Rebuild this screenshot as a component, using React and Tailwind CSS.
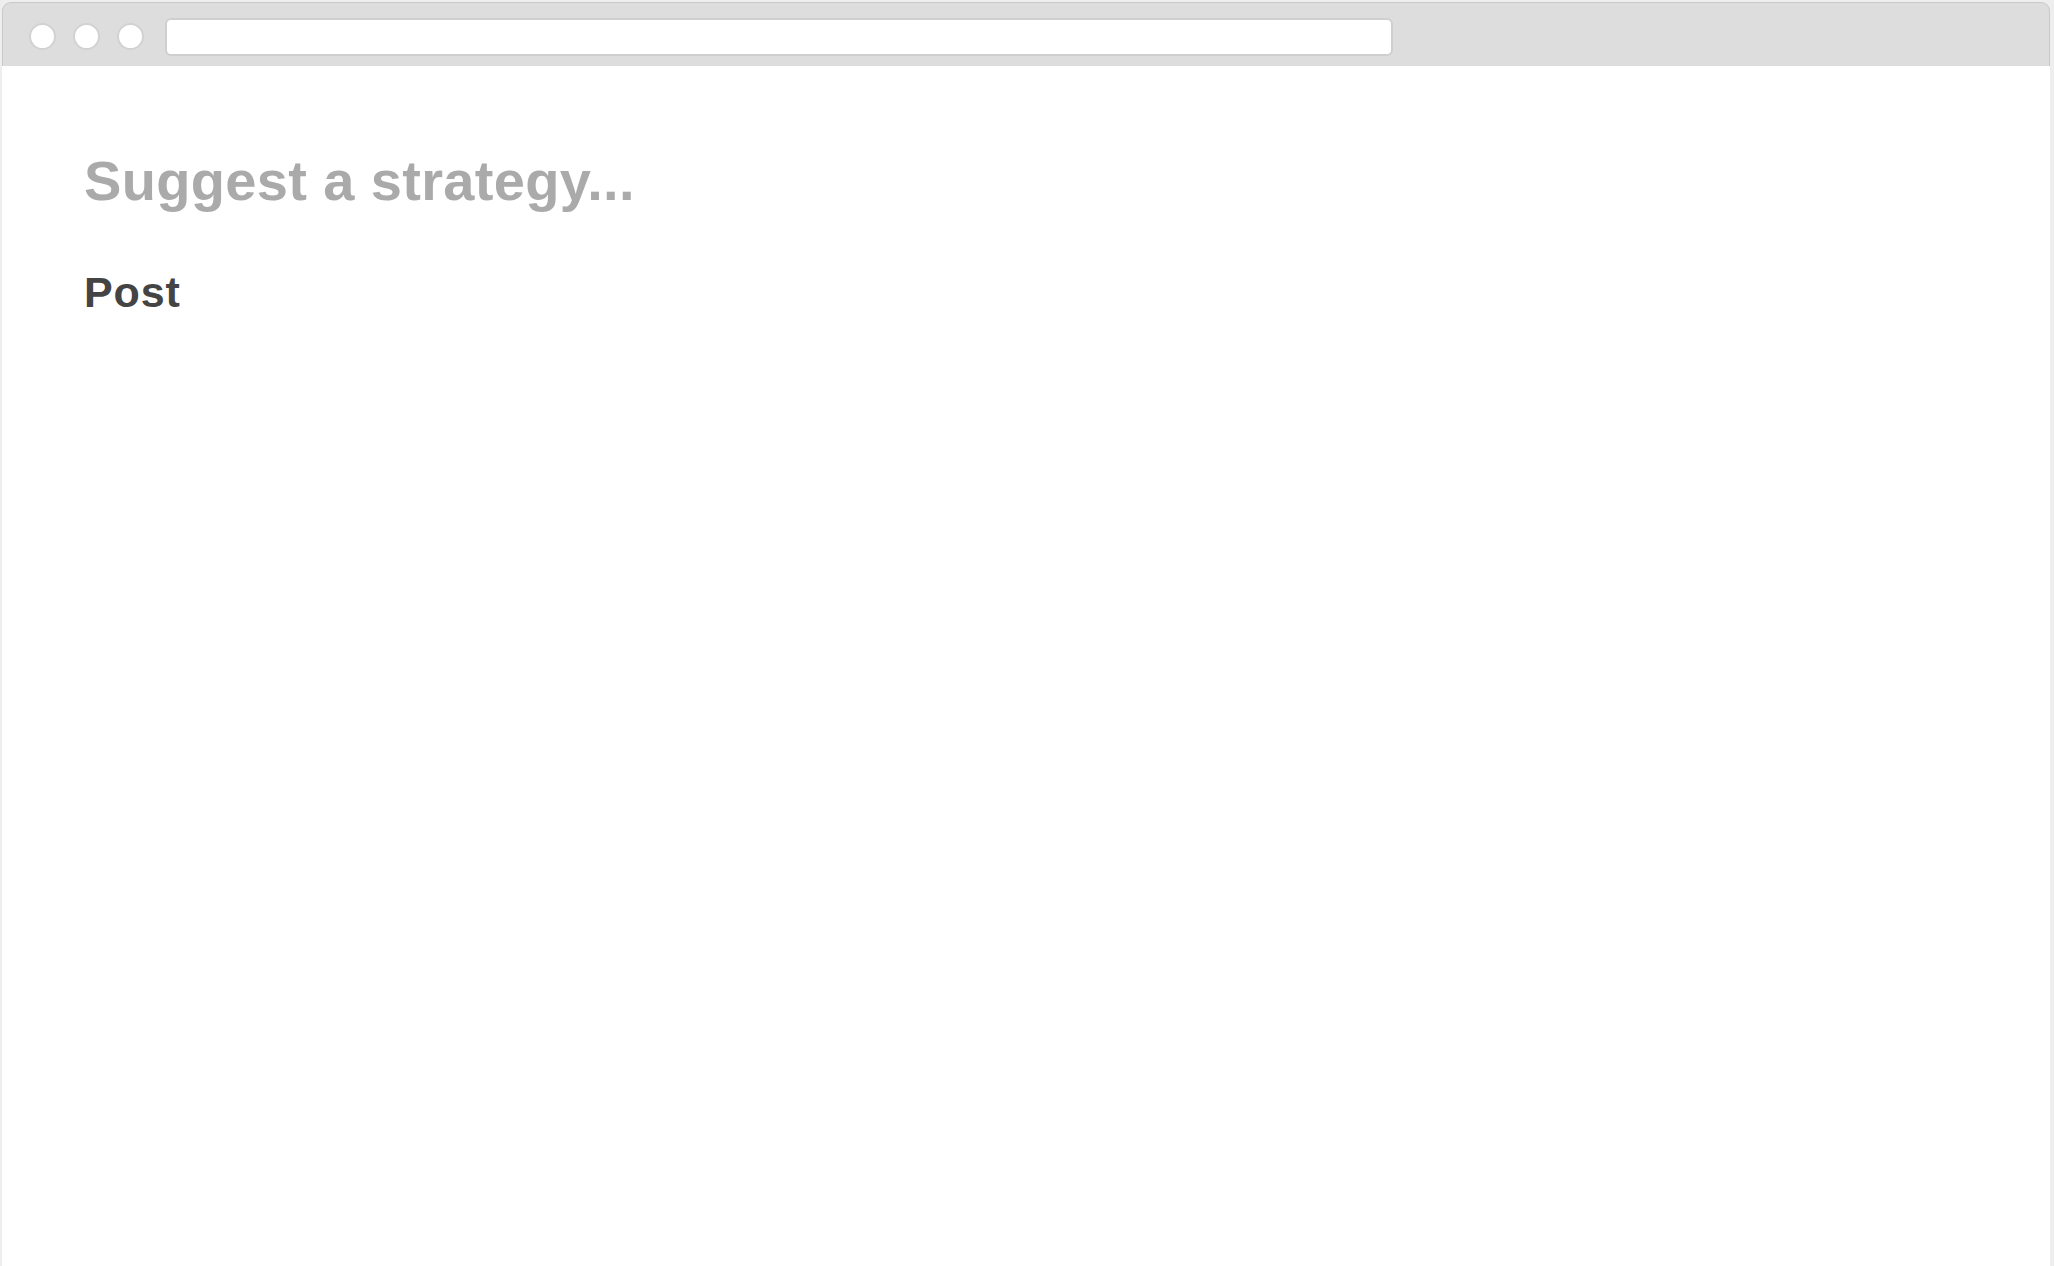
import React from "react";

const Dot = () => (
  <div className="w-[27px] h-[27px] rounded-full bg-white border-2 border-[#d2d2d2]" />
);

const App = () => {
  return (
    <div className="min-h-[1266px] bg-[#eeeeee] pl-[2px] pt-[2px] font-['Liberation_Sans',Arial,sans-serif]">
      <div className="w-[2048px] min-h-[1264px] flex flex-col">
        {/* browser chrome */}
        <div className="h-[64px] shrink-0 flex items-center pt-[4px] pl-[26px] bg-[#dddddd] border border-b-0 border-[#c9c9c9] rounded-t-[9px]">
          <div className="flex items-center gap-[17px]">
            <Dot />
            <Dot />
            <Dot />
          </div>
          <div className="ml-[21px] w-[1228px] h-[38px] bg-white border-2 border-[#cfcfcf] rounded-[6px]" />
        </div>

        {/* page */}
        <div className="flex-1 bg-white pl-[82px] pt-[87px]">
          <h1 className="text-[56px] leading-none font-bold text-[#aaaaaa] tracking-[0.35px]">
            Suggest a strategy...
          </h1>
          <button className="mt-[62px] block text-[43px] leading-none font-bold text-[#444444] tracking-[0.02em]">
            Post
          </button>
        </div>
      </div>
    </div>
  );
};

export default App;
